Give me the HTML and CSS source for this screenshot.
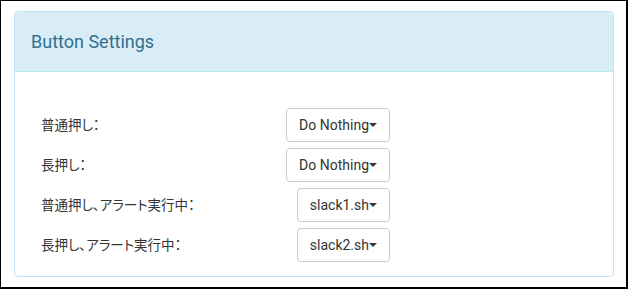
FILE: index.html
```html
<!DOCTYPE html>
<html lang="ja">
<head>
<meta charset="utf-8">
<title>Button Settings</title>
<link rel="stylesheet" href="styles.css">
</head>
<body>
<div class="frame">
  <section class="panel">
    <header class="panel-heading">
      <h3 class="panel-title">Button Settings</h3>
    </header>
    <div class="panel-body">
      <div class="setting-row">
        <span class="setting-label">普通押し：</span>
        <button class="dropdown-btn" type="button">Do Nothing<span class="caret"></span></button>
      </div>
      <div class="setting-row">
        <span class="setting-label">長押し：</span>
        <button class="dropdown-btn" type="button">Do Nothing<span class="caret"></span></button>
      </div>
      <div class="setting-row">
        <span class="setting-label">普通押し、アラート実行中：</span>
        <button class="dropdown-btn" type="button">slack1.sh<span class="caret"></span></button>
      </div>
      <div class="setting-row">
        <span class="setting-label">長押し、アラート実行中：</span>
        <button class="dropdown-btn" type="button">slack2.sh<span class="caret"></span></button>
      </div>
    </div>
  </section>
</div>
</body>
</html>
```

FILE: styles.css
```css
* { box-sizing: border-box; }

html, body {
  margin: 0;
  padding: 0;
  background: #fff;
}

body {
  font-family: Roboto, "Noto Sans CJK JP", sans-serif;
  color: #333;
}

.frame {
  width: 628px;
  height: 289px;
  border-style: solid;
  border-color: #000;
  border-width: 1px 2px 2px 1px;
  padding: 10px 12px 10px 13px;
}

.panel {
  width: 600px;
  height: 266px;
  border: 1px solid #bce8f1;
  border-radius: 4px;
  background: #fff;
  display: flex;
  flex-direction: column;
}

.panel-heading {
  background: #d9edf7;
  border-bottom: 1px solid #bce8f1;
  border-radius: 3px 3px 0 0;
  padding: 20px 15px 19px 16px;
}

.panel-title {
  margin: 0;
  font-family: Roboto, sans-serif;
  font-size: 18px;
  font-weight: 400;
  line-height: 20px;
  color: #31708f;
}

.panel-body {
  padding: 36px 15px 13px 26px;
  display: flex;
  flex-direction: column;
  gap: 6px;
}

.setting-row {
  width: 349px;
  display: flex;
  align-items: center;
  justify-content: space-between;
}

.setting-label {
  font-family: Roboto, "Noto Sans CJK JP", sans-serif;
  font-size: 13.5px;
  line-height: 20px;
  color: #333;
  font-feature-settings: "palt";
}

.dropdown-btn {
  font-family: Roboto, sans-serif;
  font-size: 14px;
  line-height: 20px;
  color: #333;
  background: #fff;
  border: 1px solid #ccc;
  border-radius: 4px;
  padding: 6px 12px;
  margin: 0;
  white-space: nowrap;
}

.caret {
  display: inline-block;
  width: 0;
  height: 0;
  vertical-align: middle;
  border-top: 4px solid #333;
  border-left: 4px solid transparent;
  border-right: 4px solid transparent;
  margin-top: -2px;
}
```
